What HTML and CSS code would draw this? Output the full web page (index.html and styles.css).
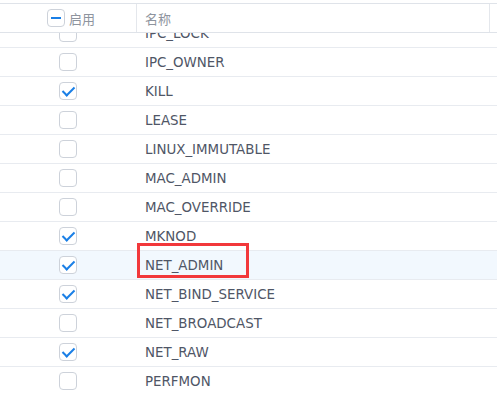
FILE: index.html
```html
<!DOCTYPE html>
<html lang="zh-CN">
<head>
    <meta charset="UTF-8">
    <meta name="viewport" content="width=device-width, initial-scale=1.0">
    <title>Capabilities</title>
    <link rel="stylesheet" href="styles.css">
</head>
<body>
    <div class="grid">
        <div class="grid__head">
            <div class="cell cell_check">
                <span class="box box_partial"></span>
                <span>启用</span>
            </div>
            <div class="cell cell_name">名称</div>
            <div class="cell cell_gutter"></div>
        </div>
        <div class="grid__body">
            <div id="rows" class="rows"></div>
            <div class="mark"></div>
        </div>
    </div>

    <script>
        const caps = [
            ["IPC_LOCK", false],
            ["IPC_OWNER", false],
            ["KILL", true],
            ["LEASE", false],
            ["LINUX_IMMUTABLE", false],
            ["MAC_ADMIN", false],
            ["MAC_OVERRIDE", false],
            ["MKNOD", true],
            ["NET_ADMIN", true],
            ["NET_BIND_SERVICE", true],
            ["NET_BROADCAST", false],
            ["NET_RAW", true],
            ["PERFMON", false],
            ["SETFCAP", false]
        ]

        const rows = document.getElementById('rows');

        caps.forEach(([name, on]) => {
            const row = document.createElement('div');
            row.className = 'row' + (name === 'NET_ADMIN' ? ' row_active' : '');
            row.innerHTML = `
                <div class="cell cell_check"><span class="box${on ? ' box_on' : ''}"></span></div>
                <div class="cell cell_name">${name}</div>
            `;
            rows.appendChild(row);
        })
    </script>
</body>
</html>
```

FILE: styles.css
```css
body {
    margin: 0;
    background: #fff;
    font-family: 'DejaVu Sans', 'Noto Sans CJK SC', sans-serif;
    font-size: 13.4px;
    color: #4f5666;
}

.grid {
    padding-top: 3px;
}

.grid__head {
    display: grid;
    grid-template-columns: 137px 1fr 7px;
    height: 28px;
    border-top: 1px solid #dfe3e9;
    border-bottom: 1px solid #dfe3e9;
    color: #8e949e;
    font-family: 'Noto Sans CJK SC', sans-serif;
    font-size: 13px;
}

.grid__head .cell_check {
    border-right: 1px solid #e4e7ec;
    gap: 4px;
    padding-left: 6px;
}

.grid__head .cell_name {
    border-right: 1px solid #e4e7ec;
}

.grid__body {
    position: relative;
    height: 360px;
    overflow: hidden;
}

.rows {
    margin-top: -14px;
}

.row {
    display: grid;
    grid-template-columns: 137px 1fr;
    height: 28px;
    border-bottom: 1px solid #e8ebf0;
}

.row_active {
    background: #f2f8fe;
}

.cell {
    display: flex;
    align-items: center;
}

.cell_check {
    justify-content: center;
}

.cell_name {
    padding-left: 8px;
}

.box {
    width: 18px;
    height: 18px;
    box-sizing: border-box;
    border: 1px solid #cdd2da;
    border-radius: 4px;
    background: #fff;
    position: relative;
}

.row .box {
    margin-left: -1px;
}

.box_partial::after {
    content: '';
    position: absolute;
    left: 3px;
    top: 7px;
    width: 10px;
    height: 2px;
    background: #1a7fe6;
}

.box_on::after {
    content: '';
    position: absolute;
    left: 5px;
    top: 1px;
    width: 5px;
    height: 10px;
    border-right: 2px solid #1a7fe6;
    border-bottom: 2px solid #1a7fe6;
    transform: rotate(45deg);
}

.mark {
    position: absolute;
    left: 137px;
    top: 210px;
    width: 106px;
    height: 29px;
    border: 3px solid #f2383b;
}
```
